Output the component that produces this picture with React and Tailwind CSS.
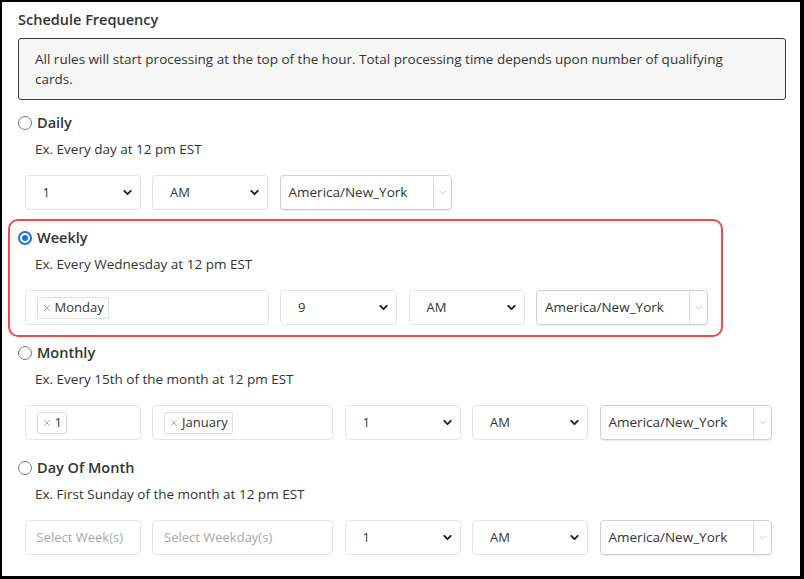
import React from "react";
import { ChevronDown, X } from "lucide-react";

const font = { fontFamily: '"Open Sans", "Liberation Sans", sans-serif' };

const Radio = ({ checked }) =>
  checked ? (
    <span className="w-[14px] h-[14px] rounded-full bg-[#1f6fe5] flex items-center justify-center">
      <span className="w-[10px] h-[10px] rounded-full border-2 border-white bg-[#1f6fe5]" />
    </span>
  ) : (
    <span className="w-[14px] h-[14px] rounded-full border border-[#7a7a7a] bg-white" />
  );

const NativeSelect = ({ value, w = "w-[116px]" }) => (
  <div
    className={`${w} h-[35px] shrink-0 flex items-center justify-between pl-[17px] pr-[6px] border border-[#e3e3e3] rounded-[4px] bg-white text-[13px] text-[#333]`}
  >
    <span>{value}</span>
    <ChevronDown size={13} strokeWidth={3.5} className="text-[#222]" />
  </div>
);

const TzSelect = () => (
  <div className="w-[172px] h-[35px] shrink-0 flex items-stretch border border-[#cfcfcf] rounded-[4px] bg-white shadow-[0_1px_1px_rgba(0,0,0,0.08)]">
    <div className="flex-1 flex items-center pl-[8px] text-[13.5px] text-[#333]">America/New_York</div>
    <div className="my-[1px] w-px bg-[#dcdcdc]" />
    <div className="w-[17px] flex items-center justify-center">
      <ChevronDown size={11} strokeWidth={1.2} className="text-[#999]" />
    </div>
  </div>
);

const Chip = ({ label }) => (
  <span className="h-[22px] flex items-center gap-[3px] px-[4px] border border-[#dedede] rounded-[2px] bg-white text-[13px] text-[#333]">
    <X size={10} strokeWidth={1.5} className="text-[#777]" />
    {label}
  </span>
);

const MultiField = ({ w, chip, placeholder }) => (
  <div
    className={`${w} h-[35px] shrink-0 flex items-center pl-[11px] border border-[#e3e3e3] rounded-[4px] bg-white`}
  >
    {chip ? <Chip label={chip} /> : <span className="text-[13px] text-[#a8a8a8]">{placeholder}</span>}
  </div>
);

const Option = ({ label, example, checked, children }) => (
  <>
    <div className="h-[20px] flex items-center gap-[5px]">
      <Radio checked={checked} />
      <span className="text-[14.5px] font-semibold text-[#333]">{label}</span>
    </div>
    <div className="mt-[6px] h-[20px] pl-[17px] text-[13.5px] leading-[20px] text-[#333]">{example}</div>
    <div className="mt-[16px] pl-[6.5px] flex gap-[11.5px]">{children}</div>
  </>
);

export default function App() {
  return (
    <div
      style={font}
      className="w-[804px] h-[579px] bg-white border-l-[2px] border-t-[2px] border-r-[4px] border-b-[3px] border-black px-[16px] overflow-hidden"
    >
      <div className="pt-[8px] h-[28px] leading-[20px] text-[14.5px] font-semibold text-[#333]">Schedule Frequency</div>

      <div className="mt-[8px] w-[768px] h-[62px] border border-[#3a3a3a] rounded-[3px] bg-[#f6f6f6] pl-[16px] pr-[40px] pt-[10px] text-[13.5px] leading-[20px] text-[#333]">
        All rules will start processing at the top of the hour. Total processing time depends upon number of
        qualifying cards.
      </div>

      <div className="mt-[13px]">
        <Option label="Daily" example="Ex. Every day at 12 pm EST">
          <NativeSelect value="1" />
          <NativeSelect value="AM" />
          <TzSelect />
        </Option>
      </div>

      <div className="mt-[9px] ml-[-10px] w-[715px] border-2 border-[#ef4a4d] rounded-[10px] pl-[8px] pt-[7px] pb-[10px]">
        <Option label="Weekly" example="Ex. Every Wednesday at 12 pm EST" checked>
          <MultiField w="w-[244px]" chip="Monday" />
          <NativeSelect value="9" w="w-[117px]" />
          <NativeSelect value="AM" />
          <TzSelect />
        </Option>
      </div>

      <div className="mt-[6px]">
        <Option label="Monthly" example="Ex. Every 15th of the month at 12 pm EST">
          <MultiField w="w-[116px]" chip="1" />
          <MultiField w="w-[181px]" chip="January" />
          <NativeSelect value="1" />
          <NativeSelect value="AM" />
          <TzSelect />
        </Option>
      </div>

      <div className="mt-[18px]">
        <Option label="Day Of Month" example="Ex. First Sunday of the month at 12 pm EST">
          <MultiField w="w-[116px]" placeholder="Select Week(s)" />
          <MultiField w="w-[181px]" placeholder="Select Weekday(s)" />
          <NativeSelect value="1" />
          <NativeSelect value="AM" />
          <TzSelect />
        </Option>
      </div>
    </div>
  );
}
